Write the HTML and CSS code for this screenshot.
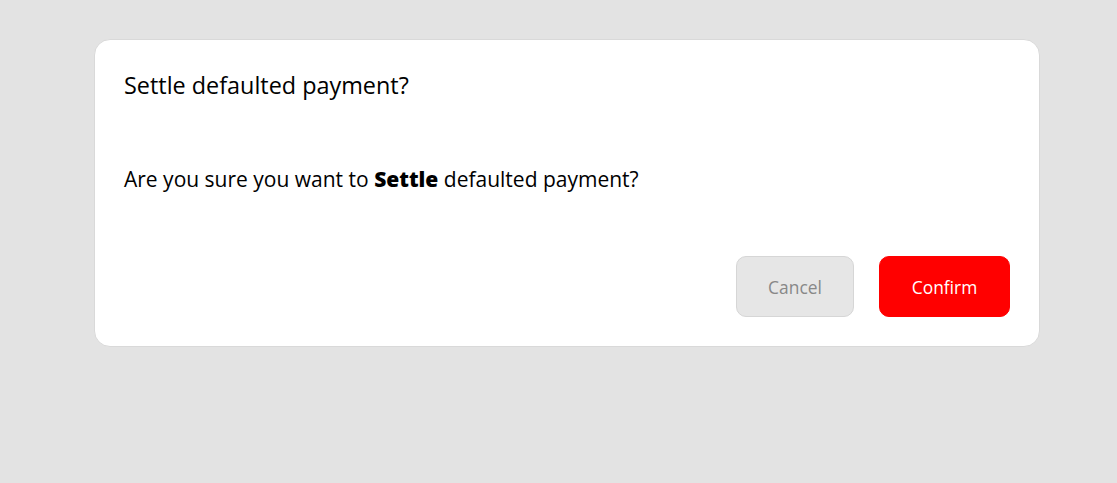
FILE: index.html
```html
<!DOCTYPE html>
<html lang="en">
<head>
<meta charset="utf-8">
<title>Settle defaulted payment?</title>
<link rel="stylesheet" href="styles.css">
</head>
<body>
<div class="dialog">
  <h2 class="dialog-title">Settle defaulted payment?</h2>
  <p class="dialog-body">Are you sure you want to <strong>Settle</strong> defaulted payment?</p>
  <div class="dialog-actions">
    <button class="btn btn-cancel" type="button">Cancel</button>
    <button class="btn btn-confirm" type="button">Confirm</button>
  </div>
</div>
</body>
</html>
```

FILE: styles.css
```css
html, body {
  margin: 0;
  padding: 0;
}
body {
  background: #e3e3e3;
  font-family: "Open Sans", "Noto Sans", sans-serif;
  color: #000;
  padding: 39px 77px 0 94px;
  height: 483px;
  box-sizing: border-box;
}
.dialog {
  background: #fff;
  border: 1px solid #d9d9d9;
  border-radius: 16px;
  padding: 29px 29px 29px 29px;
  display: flex;
  flex-direction: column;
}
.dialog-title {
  margin: 0;
  font-size: 23.4px;
  font-weight: 400;
  line-height: 32px;
  letter-spacing: 0;
}
.dialog-body {
  margin: 62px 0 0 0;
  font-size: 21px;
  line-height: 32px;
}
.dialog-body strong {
  font-weight: 800;
}
.dialog-actions {
  margin-top: 61px;
  display: flex;
  justify-content: flex-end;
  gap: 25px;
}
.btn {
  font-family: inherit;
  font-size: 17.4px;
  height: 61px;
  border-radius: 10px;
  cursor: pointer;
}
.btn-cancel {
  width: 118px;
  background: #e6e6e6;
  border: 1px solid #d6d6d6;
  color: #888;
}
.btn-confirm {
  width: 131px;
  background: #ff0000;
  border: 1px solid #ff0000;
  color: #fff;
}
```
